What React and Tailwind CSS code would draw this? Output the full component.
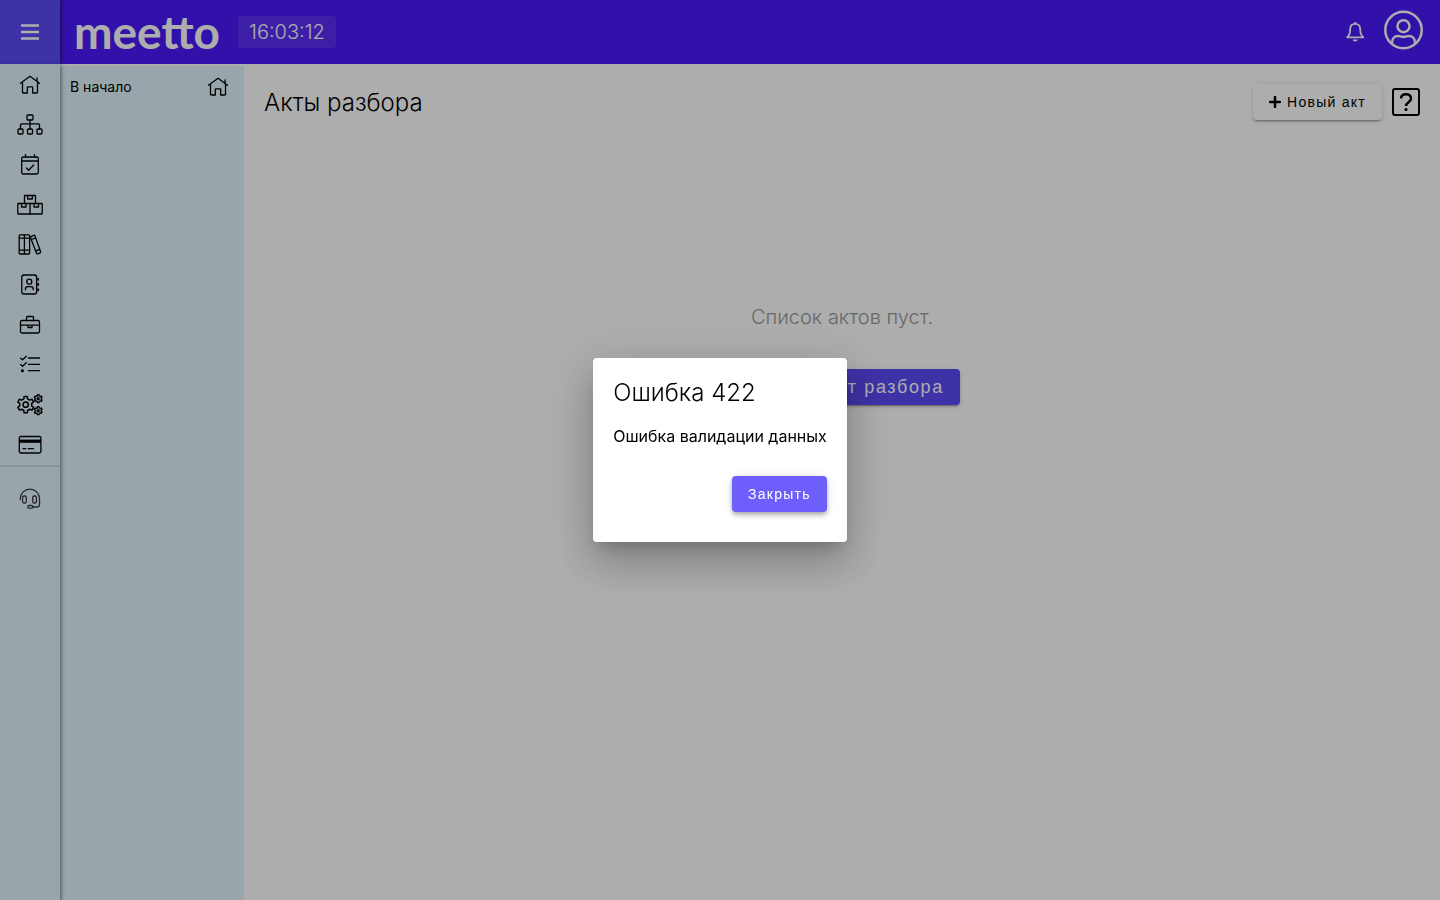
import { useState } from "react"

// Outline of a cog wheel with flat teeth
function gearPath(cx, cy, outer, inner, teeth) {
  const points = []
  const step = (Math.PI * 2) / teeth
  for (let i = 0; i < teeth; i++) {
    const a = i * step + step / 2
    const corners = [
      [inner, a - step * 0.3],
      [outer, a - step * 0.19],
      [outer, a + step * 0.19],
      [inner, a + step * 0.3],
    ]
    corners.forEach(([r, t]) => {
      points.push(`${(cx + r * Math.cos(t)).toFixed(2)} ${(cy + r * Math.sin(t)).toFixed(2)}`)
    })
  }
  return `M${points.join("L")}Z`
}

function Icon({ children, className = "" }) {
  return (
    <svg
      viewBox="0 0 28 28"
      fill="none"
      stroke="currentColor"
      strokeWidth="1.3"
      strokeLinecap="round"
      strokeLinejoin="round"
      className={`size-7 shrink-0 ${className}`}
      aria-hidden="true"
    >
      {children}
    </svg>
  )
}

function HouseIcon() {
  return (
    <Icon>
      <path d="M4.500 12.300 14 5.300l9.500 7M6.500 11v10.200q0 .8.8.8h4v-5.500q0-.6.600-.6h4.200q.6 0 .6.600v5.500h4q.8 0 .8-.8V11M21 7v3.200" />
    </Icon>
  )
}

const navItems = [
  { id: "home", label: "В начало", icon: <HouseIcon /> },
  {
    id: "structure",
    label: "Структура",
    icon: (
      <Icon>
        <rect x="11" y="4" width="6" height="5" rx="1" />
        <rect x="2" y="18" width="5" height="5" rx="1" />
        <rect x="11.500" y="18" width="5" height="5" rx="1" />
        <rect x="21" y="18" width="5" height="5" rx="1" />
        <path d="M14 9v9M4.500 18v-4.200q0-1 1-1h17q1 0 1 1V18" />
      </Icon>
    ),
  },
  {
    id: "calendar",
    label: "Календарь",
    icon: (
      <Icon>
        <rect x="5.700" y="6" width="16.600" height="17" rx="1.500" />
        <path d="M5.700 10h16.600M9.500 3.700V6M18.500 3.700V6M10.500 17l2.200 2.200L17.700 14" />
      </Icon>
    ),
  },
  {
    id: "warehouse",
    label: "Склад",
    icon: (
      <Icon>
        <rect x="1.800" y="12.500" width="24.400" height="10.500" rx="0.500" />
        <path d="M14 12.500V23M8.500 12.500v-8h11v8M11.700 4.500v3.500h4.600V4.500M5.500 12.500V16H10v-3.500M18 12.500V16h4.500v-3.500" />
      </Icon>
    ),
  },
  {
    id: "library",
    label: "Библиотека",
    icon: (
      <Icon>
        <rect x="3.200" y="3.800" width="10.400" height="19.200" rx="1" />
        <path d="M8.400 3.800V23M3.200 7.200h10.400M3.200 19.200h10.400" />
        <path d="m14.600 5.600 3.200-1.300q.8-.3 1.100.5l5.700 16q.3.800-.5 1.100l-2.500.9q-.8.300-1.100-.5l-6-15.700M15.500 8.500l4.300-1.600M19.800 19.800l4-1.500" />
      </Icon>
    ),
  },
  {
    id: "contacts",
    label: "Контакты",
    icon: (
      <Icon>
        <rect x="5.800" y="4" width="14.800" height="19" rx="2.200" />
        <circle cx="13.300" cy="10.700" r="2.500" />
        <path d="M9.400 18.800v-.6q0-2.600 2.600-2.600h2.600q2.600 0 2.600 2.600v.6" />
        <path d="M22.200 7.500v1.500M22.200 12.700v1.500M22.200 18v1.500" strokeWidth="1.700" />
      </Icon>
    ),
  },
  {
    id: "work",
    label: "Работа",
    icon: (
      <Icon>
        <rect x="4.500" y="9.500" width="19" height="12.500" rx="1.500" />
        <path d="M10.500 9.500v-3q0-1 1-1h5q1 0 1 1v3M4.500 14.200h19M12 14.200v2.300h4v-2.300" />
      </Icon>
    ),
  },
  {
    id: "tasks",
    label: "Задачи",
    icon: (
      <Icon>
        <path d="M12.500 7h11M12.500 13.400h11M12.500 19.700h11M4.600 7.200l2 1.600 3.700-3.500M4.600 13.600l2 1.600 3.700-3.500" />
        <circle cx="6.400" cy="19.700" r="0.900" fill="currentColor" />
      </Icon>
    ),
  },
  {
    id: "settings",
    label: "Настройки",
    icon: (
      <Icon>
        <path d={gearPath(9.7, 13.7, 8.3, 6.1, 6)} strokeWidth="1.500" />
        <circle cx="9.700" cy="13.700" r="2.600" strokeWidth="1.500" />
        <path d={gearPath(22.2, 7.7, 4.1, 3, 6)} />
        <circle cx="22.200" cy="7.700" r="1" />
        <path d={gearPath(22.2, 19.7, 4.1, 3, 6)} />
        <circle cx="22.200" cy="19.700" r="1" />
      </Icon>
    ),
  },
  {
    id: "payments",
    label: "Оплата",
    icon: (
      <Icon>
        <rect x="3.300" y="5.500" width="21.600" height="16.500" rx="1.500" />
        <path d="M3.300 10.200h21.600" strokeWidth="3.200" strokeLinecap="butt" />
        <path d="M7 17.700h2.700M12.200 17.700h5.300" />
      </Icon>
    ),
  },
]

function TopBar() {
  return (
    <header className="flex h-16 items-center bg-[#4b19fb] pr-4 text-white">
      <button
        type="button"
        aria-label="Меню"
        className="flex h-16 w-[60px] items-center justify-center bg-[#5b4af6] shadow-[1px_0_4px_rgba(0,0,0,0.5)]"
      >
        <svg viewBox="0 0 20 20" stroke="currentColor" strokeWidth="2.500" className="size-5" aria-hidden="true">
          <path d="M1 3.500h18M1 10h18M1 16.500h18" />
        </svg>
      </button>
      <a href="#" className="ml-[14px] font-['Lato',sans-serif] text-[46px] leading-[60px] font-bold">
        meetto
      </a>
      <time className="ml-[18px] rounded bg-[#5b2ef7] px-[11px] text-xl leading-8 font-light">16:03:12</time>
      <div className="ml-auto flex items-center gap-4">
        <button type="button" aria-label="Уведомления">
          <svg viewBox="0 0 24 24" fill="none" stroke="currentColor" strokeWidth="1.800" className="size-6" aria-hidden="true">
            <path d="M11.200 3.800c-3.300 0-5 2.200-5 5.200 0 4.200-.8 6.600-3 8.300h16c-2.200-1.700-3-4.100-3-8.300 0-3-1.700-5.200-5-5.200Z" strokeLinejoin="round" />
            <path d="M11.200 2v1.500" strokeWidth="2" />
            <path d="M8.700 19.500h5a2.500 2 0 0 1-5 0Z" fill="currentColor" stroke="none" />
          </svg>
        </button>
        <button type="button" aria-label="Профиль" className="mb-1">
          <svg viewBox="0 0 40 40" fill="none" stroke="currentColor" strokeWidth="2.500" className="size-10" aria-hidden="true">
            <circle cx="19.500" cy="20" r="18.200" />
            <circle cx="19.500" cy="16.200" r="6" />
            <path d="M8 34v-1.500c0-3.800 2.500-6.500 6-6.500 2 0 3 .9 5.500.9s3.500-.9 5.500-.9c3.500 0 6 2.700 6 6.500V34" />
          </svg>
        </button>
      </div>
    </header>
  )
}

function SideNav() {
  return (
    <nav className="z-10 w-[60px] shrink-0 bg-[#e0f4fb] shadow-[1px_2px_4px_rgba(0,0,0,0.5)]">
      <ul className="border-b-2 border-[#cbdde4] pt-px">
        {navItems.map((item) => (
          <li key={item.id}>
            <a href={`#${item.id}`} aria-label={item.label} className="flex h-10 items-center justify-center">
              {item.icon}
            </a>
          </li>
        ))}
      </ul>
      <a href="#support" aria-label="Поддержка" className="flex h-16 items-center justify-center opacity-75">
        <Icon>
          <path d="M4.300 14.500V13.700a9.600 9.600 0 0 1 19.200 0v5.800q0 2.500-2.500 2.500h-4" />
          <rect x="6.600" y="11" width="3.700" height="7" rx="1.600" />
          <rect x="16.700" y="11" width="3.700" height="7" rx="1.600" />
          <rect x="11.800" y="20.500" width="5" height="2.700" rx="1.300" />
        </Icon>
      </a>
    </nav>
  )
}

function ErrorDialog({ onClose }) {
  return (
    <div className="fixed inset-0 z-20 flex items-center justify-center bg-black/32">
      <div
        role="dialog"
        aria-modal="true"
        aria-labelledby="error-title"
        className="flex flex-col rounded bg-white px-5 pt-5 pb-[30px] shadow-[0_11px_15px_-7px_rgba(0,0,0,0.2),0_24px_38px_3px_rgba(0,0,0,0.14),0_9px_46px_8px_rgba(0,0,0,0.12)]"
      >
        <h2 id="error-title" className="text-2xl leading-[30px] font-light">
          Ошибка 422
        </h2>
        <p className="mt-4 text-base leading-6">Ошибка валидации данных</p>
        <button
          type="button"
          onClick={onClose}
          className="mt-7 h-9 self-end rounded bg-[#6e5efc] px-4 font-['Liberation_Sans',sans-serif] text-sm tracking-[0.09em] text-white shadow-[0_2px_4px_-1px_rgba(0,0,0,0.2),0_4px_5px_0_rgba(0,0,0,0.14),0_1px_10px_0_rgba(0,0,0,0.12)]"
        >
          Закрыть
        </button>
      </div>
    </div>
  )
}

export default function App() {
  const [errorOpen, setErrorOpen] = useState(true)

  return (
    <div className="flex min-h-screen flex-col bg-white font-['Inter',sans-serif] text-black">
      <TopBar />
      <div className="flex flex-1">
        <SideNav />

        {/* Section menu */}
        <aside className="mt-[2px] w-[184px] shrink-0 bg-[#e0f4fb]">
          <a href="#home" className="flex h-[42px] items-center justify-between pr-3 pl-[10px] text-sm">
            В начало
            <HouseIcon />
          </a>
        </aside>

        <main className="flex-1 p-5">
          <div className="flex items-center justify-between">
            <h1 className="pt-0.5 text-2xl leading-[30px] font-light">Акты разбора</h1>
            <div className="flex items-center gap-[10px]">
              <button
                type="button"
                className="flex h-9 items-center gap-1.5 rounded bg-white px-4 font-['Liberation_Sans',sans-serif] text-sm tracking-[0.09em] shadow-[0_3px_1px_-2px_rgba(0,0,0,0.2),0_2px_2px_0_rgba(0,0,0,0.14),0_1px_5px_0_rgba(0,0,0,0.12)]"
              >
                <svg viewBox="0 0 12 12" stroke="currentColor" strokeWidth="2.500" strokeLinecap="round" className="size-3" aria-hidden="true">
                  <path d="M6 1v10M1 6h10" />
                </svg>
                Новый акт
              </button>
              <button type="button" aria-label="Справка">
                <svg viewBox="0 0 28 28" fill="none" stroke="currentColor" strokeWidth="2" className="size-7" aria-hidden="true">
                  <rect x="1" y="1" width="26" height="26" rx="2" />
                  <path d="M9 10.500C9 7.800 11.200 6.200 14 6.200s5 1.600 5 4.200c0 3.700-5 3.800-5 7.600" strokeWidth="2.500" />
                  <circle cx="14" cy="21.500" r="1.600" fill="currentColor" stroke="none" />
                </svg>
              </button>
            </div>
          </div>

          {/* Empty state */}
          <div className="mt-[183px] flex flex-col items-center gap-[38px]">
            <p className="text-xl font-light text-[#999999]">Список актов пуст.</p>
            <button
              type="button"
              className="h-9 rounded bg-[#5b4af6] px-4 font-['Liberation_Sans',sans-serif] text-lg tracking-[0.09em] text-white shadow-[0_3px_1px_-2px_rgba(0,0,0,0.2),0_2px_2px_0_rgba(0,0,0,0.14),0_1px_5px_0_rgba(0,0,0,0.12)]"
            >
              Создать акт разбора
            </button>
          </div>
        </main>
      </div>

      {errorOpen && <ErrorDialog onClose={() => setErrorOpen(false)} />}
    </div>
  )
}
